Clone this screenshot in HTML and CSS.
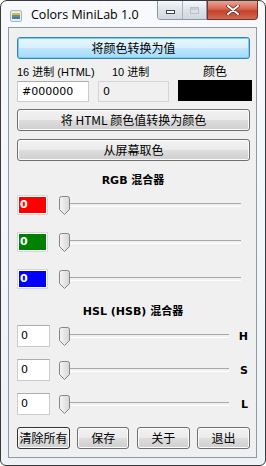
FILE: index.html
```html
<!DOCTYPE html>
<html lang="zh-CN">
<head>
  <meta charset="UTF-8">
  <meta name="viewport" content="width=device-width, initial-scale=1.0">
  <title>Colors MiniLab 1.0</title>
  <link rel="stylesheet" href="styles.css">
</head>
<body>
  <div class="window">
    <div class="titlebar">
      <div class="app-icon">
        <svg width="12" height="12" viewBox="0 0 12 12">
          <rect x="0.5" y="0.5" width="11" height="11" rx="1.5" fill="#e8eef4" stroke="#aab4c0"/>
          <rect x="2" y="3" width="8" height="2" fill="#e0b84a"/>
          <rect x="2" y="5" width="8" height="2" fill="#5a9a6a"/>
          <rect x="2" y="7" width="8" height="2" fill="#4a78b8"/>
        </svg>
      </div>
      <div class="title">Colors MiniLab 1.0</div>
      <div class="caption-btns">
        <div class="cap-group">
          <div class="cap-btn"><span class="min-glyph"></span></div>
          <div class="cap-btn"><span class="max-glyph"></span></div>
        </div>
        <div class="cap-close">
          <svg width="14" height="10" viewBox="0 0 14 10">
            <path d="M2 1 L12 9 M12 1 L2 9" stroke="#5a2a22" stroke-width="3.4" stroke-linecap="round"/>
            <path d="M2 1 L12 9 M12 1 L2 9" stroke="#fff" stroke-width="2" stroke-linecap="round"/>
          </svg>
        </div>
      </div>
    </div>

    <div class="client">
      <button class="btn btn-default wide">将颜色转换为值</button>

      <div class="value-row">
        <div class="field">
          <label>16 进制 (HTML)</label>
          <div class="textbox">#000000</div>
        </div>
        <div class="field">
          <label class="indent">10 进制</label>
          <div class="textbox readonly">0</div>
        </div>
        <div class="field">
          <label class="center">颜色</label>
          <div class="swatch"></div>
        </div>
      </div>

      <button class="btn wide second">将 HTML 颜色值转换为颜色</button>
      <button class="btn wide third">从屏幕取色</button>

      <div class="heading rgb-head">RGB 混合器</div>
      <div class="rgb">
        <div class="mix-row">
          <div class="chan red">0</div>
          <div class="slider"><svg class="thumb" width="11" height="19" viewBox="0 0 11 19"><defs><linearGradient id="tg" x1="0" x2="1" y1="0" y2="0"><stop offset="0" stop-color="#f6f6f6"/><stop offset="1" stop-color="#d6d6d6"/></linearGradient></defs><path d="M0.5 2.5 Q0.5 0.5 2.5 0.5 H8.5 Q10.5 0.5 10.5 2.5 V13.5 L5.5 18.5 L0.5 13.5 Z" fill="url(#tg)" stroke="#858585"/></svg></div>
        </div>
        <div class="mix-row">
          <div class="chan green">0</div>
          <div class="slider"><svg class="thumb" width="11" height="19" viewBox="0 0 11 19"><path d="M0.5 2.5 Q0.5 0.5 2.5 0.5 H8.5 Q10.5 0.5 10.5 2.5 V13.5 L5.5 18.5 L0.5 13.5 Z" fill="url(#tg)" stroke="#858585"/></svg></div>
        </div>
        <div class="mix-row">
          <div class="chan blue">0</div>
          <div class="slider"><svg class="thumb" width="11" height="19" viewBox="0 0 11 19"><path d="M0.5 2.5 Q0.5 0.5 2.5 0.5 H8.5 Q10.5 0.5 10.5 2.5 V13.5 L5.5 18.5 L0.5 13.5 Z" fill="url(#tg)" stroke="#858585"/></svg></div>
        </div>
      </div>

      <div class="heading hsl-head">HSL (HSB) 混合器</div>
      <div class="hsl">
        <div class="mix-row hsl-row">
          <div class="textbox small">0</div>
          <div class="slider"><svg class="thumb" width="11" height="19" viewBox="0 0 11 19"><path d="M0.5 2.5 Q0.5 0.5 2.5 0.5 H8.5 Q10.5 0.5 10.5 2.5 V13.5 L5.5 18.5 L0.5 13.5 Z" fill="url(#tg)" stroke="#858585"/></svg></div>
          <b>H</b>
        </div>
        <div class="mix-row hsl-row">
          <div class="textbox small">0</div>
          <div class="slider"><svg class="thumb" width="11" height="19" viewBox="0 0 11 19"><path d="M0.5 2.5 Q0.5 0.5 2.5 0.5 H8.5 Q10.5 0.5 10.5 2.5 V13.5 L5.5 18.5 L0.5 13.5 Z" fill="url(#tg)" stroke="#858585"/></svg></div>
          <b>S</b>
        </div>
        <div class="mix-row hsl-row">
          <div class="textbox small">0</div>
          <div class="slider"><svg class="thumb" width="11" height="19" viewBox="0 0 11 19"><path d="M0.5 2.5 Q0.5 0.5 2.5 0.5 H8.5 Q10.5 0.5 10.5 2.5 V13.5 L5.5 18.5 L0.5 13.5 Z" fill="url(#tg)" stroke="#858585"/></svg></div>
          <b>L</b>
        </div>
      </div>

      <div class="bottom">
        <button class="btn focused">清除所有</button>
        <button class="btn">保存</button>
        <button class="btn">关于</button>
        <button class="btn">退出</button>
      </div>
    </div>
  </div>
</body>
</html>
```

FILE: styles.css
```css
* { box-sizing: border-box; }
body {
  margin: 0;
  background: #fff;
  font-family: "Liberation Sans", "Noto Sans CJK SC", sans-serif;
  font-size: 12px;
  color: #000;
}
.window {
  width: 266px;
  height: 466px;
  border: 1px solid #3a3a3a;
  border-radius: 7px 7px 6px 6px;
  background: linear-gradient(#f7f9fc, #eef2f7);
  padding: 0 8px 7px 7px;
  display: flex;
  flex-direction: column;
}
.titlebar {
  height: 26px;
  display: flex;
  align-items: flex-start;
}
.app-icon { margin: 9px 0 0 2px; height: 12px; }
.title {
  margin: 5px 0 0 9px;
  font-family: "Open Sans", "DejaVu Sans", sans-serif;
  font-size: 12.5px;
  color: #000;
  flex: 1;
}
.caption-btns { display: flex; margin-right: -1px; }
.cap-group {
  display: flex;
  border: 1px solid #8c97a6;
  border-top: none;
  border-radius: 0 0 0 4px;
  overflow: hidden;
}
.cap-btn {
  width: 24px;
  height: 18px;
  background: linear-gradient(#f6f8fa, #dde3ea 50%, #cfd7e0);
  display: flex;
  align-items: center;
  justify-content: center;
}
.cap-btn + .cap-btn { border-left: 1px solid #a9b3bf; }
.min-glyph {
  width: 9px; height: 4px;
  border: 1px solid #3e4652;
  background: #fff;
  margin-top: 4px;
}
.max-glyph {
  width: 9px; height: 7px;
  border: 1px solid #b8c0ca;
  box-shadow: inset 0 2px 0 #c5ccd5;
}
.cap-close {
  width: 51px;
  height: 19px;
  border: 1px solid #7a3226;
  border-top: none;
  border-radius: 0 0 4px 0;
  background: linear-gradient(#e8a697, #d9624d 45%, #c4412c 55%, #cf6a4f);
  display: flex;
  align-items: center;
  justify-content: center;
}

.client {
  flex: 1;
  background: #f0f0f0;
  border: 1px solid #8e9aa8;
  padding: 9px 7px 0 8px;
  display: flex;
  flex-direction: column;
}

.btn {
  font-family: "Noto Sans CJK SC", "Liberation Sans", sans-serif;
  font-size: 12px;
  color: #000;
  height: 22px;
  padding: 0;
  border: 1px solid #707070;
  border-radius: 3px;
  background: linear-gradient(#f2f2f2, #ebebeb 48%, #dddddd 52%, #cfcfcf);
  box-shadow: inset 0 0 0 1px #fcfcfc;
  line-height: 18px;
}
.wide { width: 233px; }
.btn-default {
  height: 22px;
  border-color: #3c7fb1;
  background: linear-gradient(#eaf6fd, #d9f0fc 48%, #bee6fd 52%, #a7d9f5);
  box-shadow: inset 0 0 0 1px #68d6f8;
}
.second { margin-top: 7px; }
.third { margin-top: 8px; }

.value-row {
  display: grid;
  grid-template-columns: 72px 71px 74px;
  column-gap: 9px;
  margin-top: 5px;
}
.field { display: flex; flex-direction: column; }
.field label {
  height: 17px;
  line-height: 17px;
  font-family: "Liberation Sans", "Noto Sans CJK SC", sans-serif;
  font-size: 11px;
  white-space: nowrap;
}
.field label.indent { padding-left: 14px; }
.field label.center { text-align: center; font-size: 12px; }
.textbox {
  height: 21px;
  border: 1px solid #c9ccd1;
  border-top-color: #abadb3;
  background: #fff;
  padding: 0 4px;
  line-height: 19px;
  font-size: 11px;
  font-family: "DejaVu Sans", sans-serif;
}
.textbox.readonly { background: #f0f0f0; border-color: #d5d5d5; }
.swatch {
  height: 21px;
  margin-top: -1px;
  background: #000;
}

.heading {
  font-weight: bold;
  text-align: center;
  font-family: "DejaVu Sans", "Noto Sans CJK SC", sans-serif;
  font-size: 11px;
  height: 16px;
  line-height: 16px;
}
.rgb-head { margin-top: 12px; }
.hsl-head { margin-top: 15px; }

.rgb {
  display: flex;
  flex-direction: column;
  gap: 17px;
  margin-top: 6px;
}
.mix-row {
  display: grid;
  grid-template-columns: 31px 1fr;
  align-items: center;
  height: 20px;
}
.chan {
  height: 20px;
  border: 1px solid #d7d7d7;
  box-shadow: inset 0 0 0 1px #fff;
  color: #fff;
  font-weight: bold;
  font-family: "DejaVu Sans", sans-serif;
  font-size: 11px;
  line-height: 18px;
  padding-left: 2px;
}
.red { background: #ff0000; }
.green { background: #008000; }
.blue { background: #0000ff; }

.slider {
  position: relative;
  height: 20px;
  margin-left: 11px;
  margin-right: 8px;
}
.slider::before {
  content: "";
  position: absolute;
  left: 1px; right: 0; top: 8px;
  height: 2px;
  border-top: 1px solid #a8a8a8;
  border-bottom: 1px solid #fff;
}
.thumb {
  position: absolute;
  left: 0;
  top: 1px;
  display: block;
}

.hsl {
  display: flex;
  flex-direction: column;
  margin-top: 5px;
  gap: 12px;
}
.hsl-row {
  grid-template-columns: 33px 1fr 20px;
  height: 22px;
}
.hsl-row .slider { margin-left: 9px; margin-right: 0; }
.textbox.small { height: 22px; line-height: 20px; padding-left: 3px; }
.hsl-row b {
  font-family: "DejaVu Sans", sans-serif;
  font-size: 11px;
  text-align: right;
  padding-right: 1px;
}

.bottom {
  display: grid;
  grid-template-columns: 53px 52px 53px 53px;
  justify-content: space-between;
  width: 233px;
  margin-top: 12px;
}
.bottom .btn { height: 22px; font-size: 12px; }
.focused { border-color: #333; }
```
